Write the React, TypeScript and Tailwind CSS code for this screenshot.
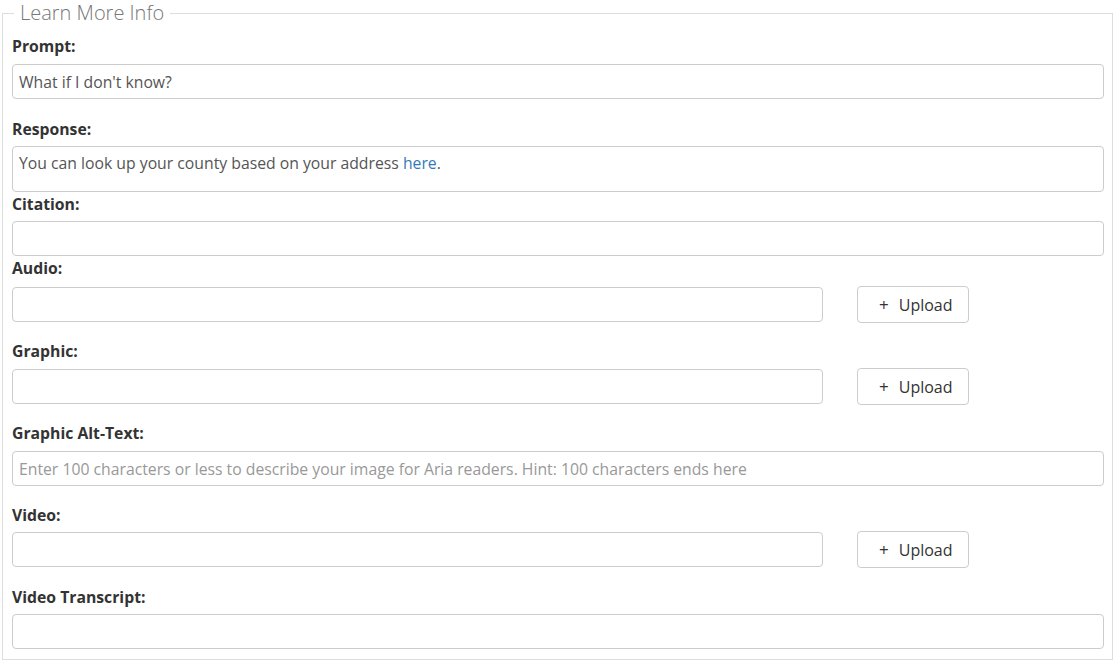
import React from 'react';

const font = { fontFamily: '"Open Sans", "Liberation Sans", sans-serif' };

const Label = ({ children, className = '' }: { children: React.ReactNode; className?: string }) => (
  <label className={`block text-[15.75px] leading-5 font-bold text-[#333] ${className}`}>{children}</label>
);

const TextInput = ({ value = '', placeholder = '', className = '' }: { value?: string; placeholder?: string; className?: string }) => (
  <input
    type="text"
    defaultValue={value}
    placeholder={placeholder}
    className={`block h-[35px] border border-[#ccc] rounded-[4px] px-[6px] text-[15.75px] text-[#555] placeholder:text-[#999] bg-white outline-none ${className}`}
  />
);

const UploadRow = ({ top }: { top: string }) => (
  <div className={`flex items-center ${top}`}>
    <TextInput className="w-[811px]" />
    <button className="ml-[34px] w-[112px] h-[37px] border border-[#ccc] rounded-[4px] bg-white text-[16px] text-[#333] flex items-center pl-[21px] gap-[10px]">
      <span className="text-[17px] leading-none">+</span>
      <span>Upload</span>
    </button>
  </div>
);

export default function App() {
  return (
    <div className="bg-white w-[1116px] h-[664px]" style={font}>
      <fieldset className="mx-[2px] w-[1111px] h-[660px] border border-[#ddd] pl-[9px] pr-[8px]">
        <legend className="ml-[2px] px-[6px] text-[20px] leading-[26px] font-light text-[#777]">Learn More Info</legend>

        <Label className="mt-[10px]">Prompt:</Label>
        <TextInput value="What if I don't know?" className="w-full mt-[8px]" />

        <Label className="mt-[20px]">Response:</Label>
        <div className="mt-[7px] h-[46px] border border-[#ccc] rounded-[4px] px-[6px] pt-[6px] text-[15.75px] leading-5 text-[#555]">
          You can look up your county based on your address <a href="#" className="text-[#337ab7]">here</a>.
        </div>

        <Label className="mt-[2px]">Citation:</Label>
        <TextInput className="w-full mt-[7px]" />

        <Label className="mt-[2px]">Audio:</Label>
        <UploadRow top="mt-[8px]" />

        <Label className="mt-[18px]">Graphic:</Label>
        <UploadRow top="mt-[7px]" />

        <Label className="mt-[18px]">Graphic Alt-Text:</Label>
        <TextInput
          placeholder="Enter 100 characters or less to describe your image for Aria readers. Hint: 100 characters ends here"
          className="w-full mt-[8px]"
        />

        <Label className="mt-[19px]">Video:</Label>
        <UploadRow top="mt-[6px]" />

        <Label className="mt-[19px]">Video Transcript:</Label>
        <TextInput className="w-full mt-[7px]" />
      </fieldset>
    </div>
  );
}
